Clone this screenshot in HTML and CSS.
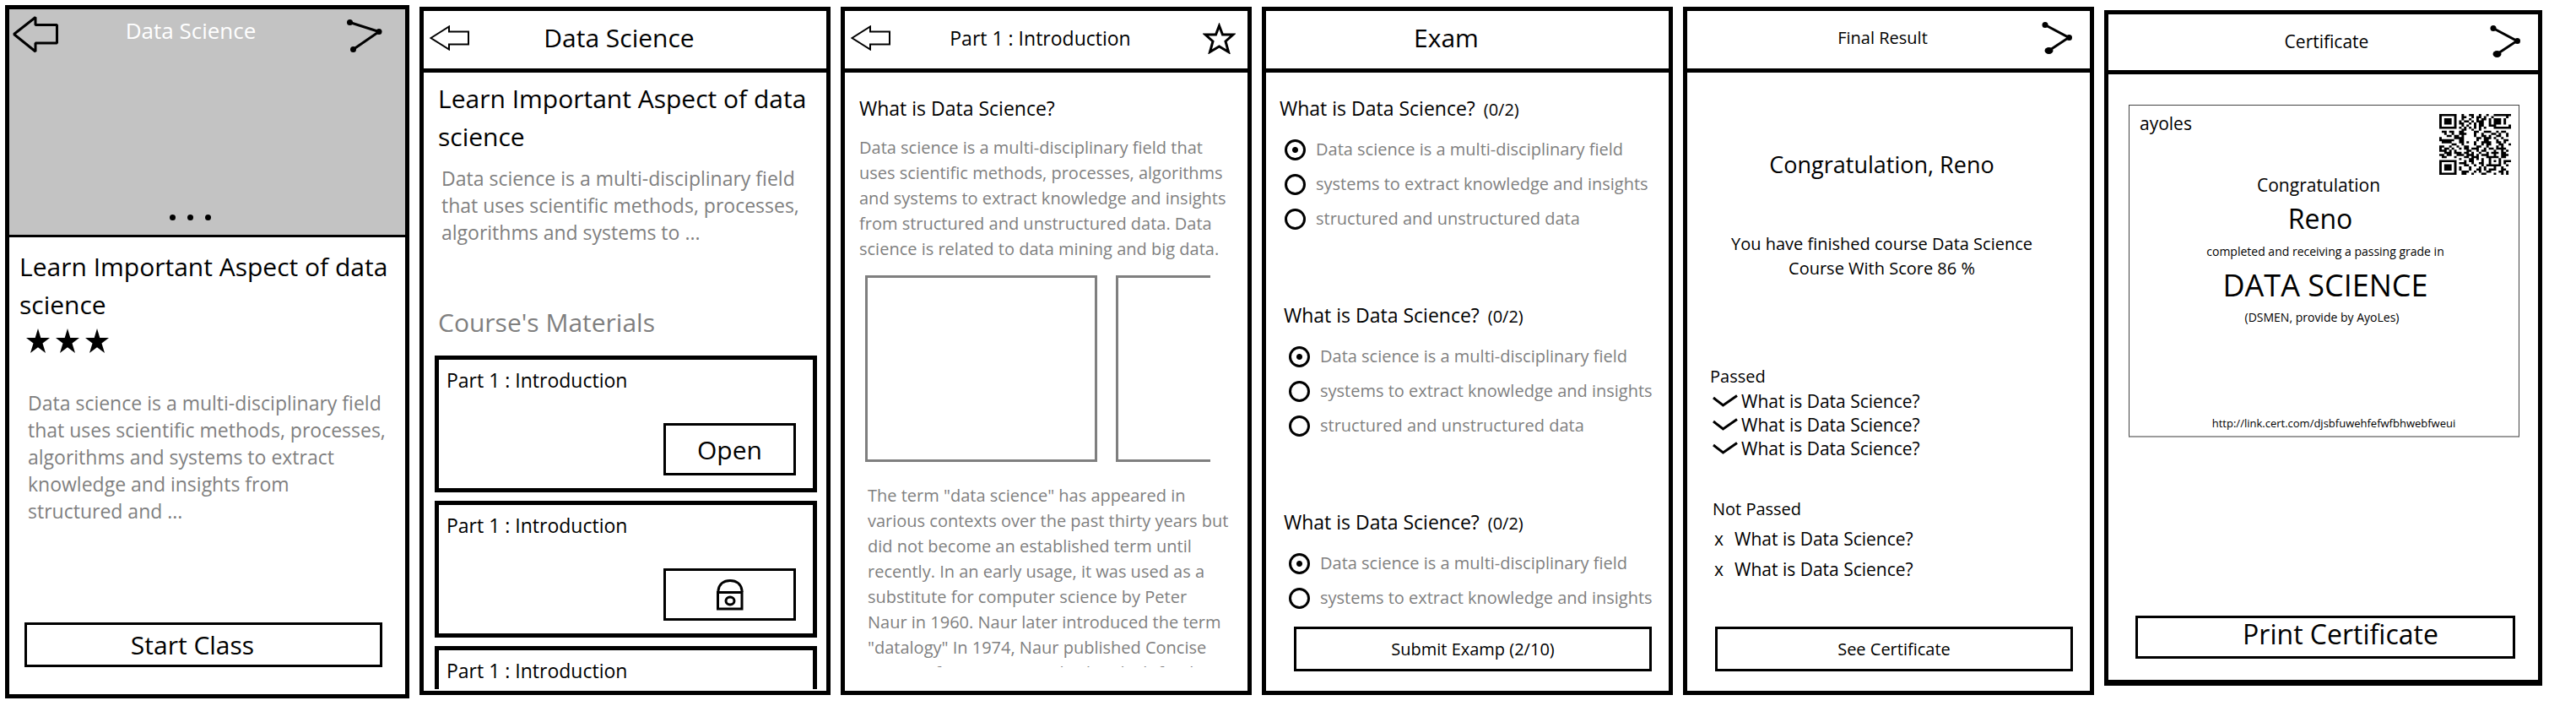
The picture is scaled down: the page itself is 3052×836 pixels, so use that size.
FILE: index.html
```html
<!DOCTYPE html>
<html lang="en">
<head>
<meta charset="utf-8">
<title>AyoLes course screens</title>
<link rel="stylesheet" href="styles.css">
</head>
<body>
<main class="board">

  <section class="screen screen-cover">
    <header class="hero">
      <div class="hero-bar">
        <button class="icon-button" aria-label="Back">
          <svg width="54" height="45" viewBox="0 0 54 45" fill="none" stroke="#000" stroke-width="3"><path d="M1.5 22.5 27 2.5V11.5H52.5V33H27V43Z" stroke-linejoin="bevel"/></svg>
        </button>
        <h1 class="hero-title">Data Science</h1>
        <button class="icon-button" aria-label="Share">
          <svg width="42" height="45" viewBox="0 0 42 45"><path d="M3.5 8.500 38 19.500 7.500 40.500" fill="none" stroke="#000" stroke-width="3"/><circle cx="3.500" cy="8.500" r="3.500"/><circle cx="38" cy="19.500" r="3.500"/><circle cx="7.500" cy="40.500" r="3.500"/></svg>
        </button>
      </div>
      <div class="dots"><span class="dot"></span><span class="dot"></span><span class="dot"></span></div>
    </header>
    <div class="cover-body">
      <h2 class="headline">Learn Important Aspect of data science</h2>
      <div class="stars" role="img" aria-label="3 stars">
        <svg width="28" height="29" viewBox="0 0 28 29"><path d="M14 0 17.300 11H28L19.500 17.600 23 29 14 22.200 5 29 8.500 17.600 0 11H10.700Z"/></svg>
        <svg width="28" height="29" viewBox="0 0 28 29"><path d="M14 0 17.300 11H28L19.500 17.600 23 29 14 22.200 5 29 8.500 17.600 0 11H10.700Z"/></svg>
        <svg width="28" height="29" viewBox="0 0 28 29"><path d="M14 0 17.300 11H28L19.500 17.600 23 29 14 22.200 5 29 8.500 17.600 0 11H10.700Z"/></svg>
      </div>
      <p class="summary">Data science is a multi-disciplinary field<br>that uses scientific methods, processes,<br>algorithms and systems to extract<br>knowledge and insights from<br>structured and ...</p>
    </div>
    <button class="action action-start">Start Class</button>
  </section>

  <section class="screen">
    <header class="bar">
      <button class="icon-button" aria-label="Back">
        <svg width="47" height="30" viewBox="0 0 47 30" fill="none" stroke="#000" stroke-width="2"><path d="M1.500 15 23 1.500V7.500H46V22.500H23V28.500Z"/></svg>
      </button>
      <h1 class="bar-title title-large">Data Science</h1>
    </header>
    <div class="course-body">
      <h2 class="headline">Learn Important Aspect of data science</h2>
      <p class="summary">Data science is a multi-disciplinary field<br>that uses scientific methods, processes,<br>algorithms and systems to ...</p>
      <h2 class="headline materials-title">Course's Materials</h2>
      <div class="cards">
        <article class="card">
          <h3 class="subhead">Part 1 : Introduction</h3>
          <button class="card-button">Open</button>
        </article>
        <article class="card">
          <h3 class="subhead">Part 1 : Introduction</h3>
          <button class="card-button" aria-label="Locked">
            <svg width="32" height="37" viewBox="0 0 32 37" fill="none" stroke="#000" stroke-width="3"><path d="M2 15V13C3 6 8 1.500 16 1.500S29 6 30 13V15"/><path d="M1.500 15.500H30V35H1.500Z"/><ellipse cx="16" cy="25.500" rx="5" ry="4.500"/></svg>
          </button>
        </article>
        <article class="card">
          <h3 class="subhead">Part 1 : Introduction</h3>
        </article>
      </div>
    </div>
  </section>

  <section class="screen">
    <header class="bar">
      <button class="icon-button" aria-label="Back">
        <svg width="47" height="30" viewBox="0 0 47 30" fill="none" stroke="#000" stroke-width="2"><path d="M1.500 15 23 1.500V7.500H46V22.500H23V28.500Z"/></svg>
      </button>
      <h1 class="bar-title title-medium">Part 1 : Introduction</h1>
      <button class="icon-button bar-end-star" aria-label="Add to favourites">
        <svg width="39" height="37" viewBox="0 0 39 37" fill="none" stroke="#000" stroke-width="3"><path d="M19.500 3.500 23.500 14H36L27 22 30.500 34.500 19.500 28 8.500 34.500 12 22 3 14H15.500Z"/></svg>
      </button>
    </header>
    <div class="reader">
      <h2 class="subhead">What is Data Science?</h2>
      <p class="copy">Data science is a multi-disciplinary field that<br>uses scientific methods, processes, algorithms<br>and systems to extract knowledge and insights<br>from structured and unstructured data. Data<br>science is related to data mining and big data.</p>
      <div class="gallery"><div class="slide"></div><div class="slide"></div></div>
      <p class="copy copy-more">The term "data science" has appeared in<br>various contexts over the past thirty years but<br>did not become an established term until<br>recently. In an early usage, it was used as a<br>substitute for computer science by Peter<br>Naur in 1960. Naur later introduced the term<br>"datalogy" In 1974, Naur published Concise<br>Survey of Computer Methods, which freely</p>
    </div>
  </section>

  <section class="screen">
    <header class="bar bar-exam">
      <h1 class="bar-title title-large">Exam</h1>
    </header>
    <form class="exam">
      <fieldset class="question">
        <legend class="subhead">What is Data Science? <span class="score">(0/2)</span></legend>
        <label class="option"><input class="radio" type="radio" name="q1" checked>Data science is a multi-disciplinary field</label>
        <label class="option"><input class="radio" type="radio" name="q1">systems to extract knowledge and insights</label>
        <label class="option"><input class="radio" type="radio" name="q1">structured and unstructured data</label>
      </fieldset>
      <fieldset class="question">
        <legend class="subhead">What is Data Science? <span class="score">(0/2)</span></legend>
        <label class="option"><input class="radio" type="radio" name="q2" checked>Data science is a multi-disciplinary field</label>
        <label class="option"><input class="radio" type="radio" name="q2">systems to extract knowledge and insights</label>
        <label class="option"><input class="radio" type="radio" name="q2">structured and unstructured data</label>
      </fieldset>
      <fieldset class="question">
        <legend class="subhead">What is Data Science? <span class="score">(0/2)</span></legend>
        <label class="option"><input class="radio" type="radio" name="q3" checked>Data science is a multi-disciplinary field</label>
        <label class="option"><input class="radio" type="radio" name="q3">systems to extract knowledge and insights</label>
      </fieldset>
    </form>
    <button class="action">Submit Examp (2/10)</button>
  </section>

  <section class="screen">
    <header class="bar">
      <h1 class="bar-title">Final Result</h1>
      <button class="icon-button bar-end-share" aria-label="Share">
        <svg width="37" height="40" viewBox="0 0 37 40"><path d="M4 4.500 32 19.500 8.500 35" fill="none" stroke="#000" stroke-width="3"/><circle cx="4" cy="4.500" r="3.500"/><circle cx="32.500" cy="19.500" r="3.500"/><ellipse cx="8.500" cy="35" rx="5" ry="4"/></svg>
      </button>
    </header>
    <div class="result">
      <h2 class="congrats">Congratulation, Reno</h2>
      <p class="verdict">You have finished course Data Science<br>Course With Score 86 %</p>
      <h3 class="group-title">Passed</h3>
      <ul class="answers">
        <li class="answer"><svg class="tick" width="30" height="16" viewBox="0 0 30 16" fill="none" stroke="#000" stroke-width="3"><path d="M1 4 12.500 13 29 1.500"/></svg>What is Data Science?</li>
        <li class="answer"><svg class="tick" width="30" height="16" viewBox="0 0 30 16" fill="none" stroke="#000" stroke-width="3"><path d="M1 4 12.500 13 29 1.500"/></svg>What is Data Science?</li>
        <li class="answer"><svg class="tick" width="30" height="16" viewBox="0 0 30 16" fill="none" stroke="#000" stroke-width="3"><path d="M1 4 12.500 13 29 1.500"/></svg>What is Data Science?</li>
      </ul>
      <h3 class="group-title group-failed">Not Passed</h3>
      <ul class="answers answers-failed">
        <li class="answer"><span class="cross">x</span>What is Data Science?</li>
        <li class="answer"><span class="cross">x</span>What is Data Science?</li>
      </ul>
    </div>
    <button class="action">See Certificate</button>
  </section>

  <section class="screen screen-certificate">
    <header class="bar bar-certificate">
      <h1 class="bar-title">Certificate</h1>
      <button class="icon-button bar-end-share" aria-label="Share">
        <svg width="37" height="40" viewBox="0 0 37 40"><path d="M4 4.500 32 19.500 8.500 35" fill="none" stroke="#000" stroke-width="3"/><circle cx="4" cy="4.500" r="3.500"/><circle cx="32.500" cy="19.500" r="3.500"/><ellipse cx="8.500" cy="35" rx="5" ry="4"/></svg>
      </button>
    </header>
    <article class="certificate">
      <div class="certificate-head">
        <span class="brand">ayoles</span>
        <svg class="qr" width="85" height="72" viewBox="0 0 29 29" preserveAspectRatio="none" role="img" aria-label="QR code">
          <path fill="none" stroke="#000" d="M0 .5h7m2 0h1m2 0h2m2 0h1m2 0h1m2 0h7M0 1.500h1m5 0h1m2 0h2m2 0h1m1 0h2m1 0h1m2 0h1m5 0h1M0 2.500h1m1 0h3m1 0h1m2 0h1m2 0h1m2 0h1m1 0h2m1 0h1m1 0h3m1 0h1M0 3.500h1m1 0h3m1 0h1m1 0h1m1 0h2m1 0h1m1 0h3m2 0h1m1 0h3m1 0h1M0 4.500h1m1 0h3m1 0h1m1 0h2m2 0h1m1 0h1m1 0h2m2 0h1m1 0h3m1 0h1M0 5.500h1m5 0h1m2 0h1m1 0h1m2 0h1m1 0h2m2 0h2m0 0h0M22 5.500h1m5 0h1M0 6.500h7m1 0h1m1 0h1m1 0h1m1 0h1m1 0h1m1 0h1m3 0h7M9 7.500h2m2 0h1m2 0h1M1 8.500h2m1 0h2m2 0h2m4 0h2m2 0h3m2 0h1m1 0h2M2 9.500h1m2 0h1m2 0h3m3 0h1m2 0h1m3 0h2m1 0h1m2 0h1M3 10.500h2m1 0h2m1 0h1m4 0h1m2 0h2m1 0h1m2 0h2m2 0h1M0 11.500h1m5 0h4m5 0h2m1 0h3m1 0h1m2 0h1M0 12.500h6m2 0h2m5 0h1m2 0h2m3 0h1m2 0h2M1 13.500h4m3 0h2m1 0h1m2 0h1m2 0h4m2 0h2m1 0h1M5 14.500h2m2 0h1m4 0h1m2 0h1m1 0h2m3 0h2m2 0h1M0 15.500h2m2 0h1m2 0h1m2 0h2m3 0h2m2 0h1m3 0h1m1 0h1M0 16.500h1m1 0h2m1 0h1m2 0h1m1 0h2m1 0h3m2 0h1m1 0h2m1 0h4M0 17.500h3m1 0h1m1 0h1m4 0h2m2 0h1m1 0h2m3 0h1m2 0h1m1 0h1M2 18.500h3m1 0h3m1 0h2m1 0h1m2 0h1m2 0h1m1 0h3m1 0h2M0 19.500h2m1 0h2m2 0h3m1 0h3m1 0h1m1 0h3m2 0h1m2 0h3M1 20.500h2m3 0h1m3 0h2m1 0h3m3 0h5m1 0h2M8 21.500h1m3 0h2m1 0h1m1 0h1m2 0h1m3 0h1M0 22.500h7m3 0h1m1 0h2m3 0h1m2 0h1m1 0h1m1 0h1m1 0h3M0 23.500h1m5 0h1m1 0h3m2 0h1m2 0h2m2 0h1m3 0h1m1 0h1M0 24.500h1m1 0h3m1 0h1m3 0h2m2 0h1m2 0h1m1 0h6m2 0h1M0 25.500h1m1 0h3m1 0h1m1 0h1m3 0h1m3 0h1m1 0h1m3 0h1m2 0h1M0 26.500h1m1 0h3m1 0h1m1 0h1m3 0h1m2 0h2m1 0h1m1 0h3m2 0h2M0 27.500h1m5 0h1m2 0h3m2 0h1m1 0h1m2 0h2m3 0h2m1 0h1M0 28.500h7m2 0h2m2 0h1m3 0h2m3 0h1m2 0h1m1 0h1"/>
        </svg>
      </div>
      <p class="cert-small-title">Congratulation</p>
      <p class="cert-name">Reno</p>
      <p class="cert-note">completed and receiving a passing grade in</p>
      <p class="cert-course">DATA SCIENCE</p>
      <p class="cert-note cert-code">(DSMEN, provide by AyoLes)</p>
      <a class="cert-link" href="http://link.cert.com/djsbfuwehfefwfbhwebfweui">http://link.cert.com/djsbfuwehfefwfbhwebfweui</a>
    </article>
    <button class="action action-print">Print Certificate</button>
  </section>

</main>
</body>
</html>
```

FILE: styles.css
```css
* {
  box-sizing: border-box;
}

body {
  margin: 0;
  background: #fff;
  color: #000;
  font-family: "Open Sans", "Noto Sans", sans-serif;
  font-size: 20px;
}

h1, h2, h3, p, ul {
  margin: 0;
  padding: 0;
  font-weight: 400;
}

button {
  font-family: inherit;
  color: inherit;
  background: none;
  cursor: pointer;
}

svg {
  display: block;
}

/* Board of six phone screens */
.board {
  display: grid;
  grid-template-columns: 479fr 487fr 487fr 487fr 487fr 519fr;
  grid-template-rows: minmax(0, 1fr);
  column-gap: 12px;
  height: 100vh;
  padding: 6px 40px 9px 6px;
}

.screen {
  display: flex;
  flex-direction: column;
  min-width: 0;
  margin: 2px 0 4px;
  border: 5px solid #000;
}

.screen-cover {
  margin: 0;
}

.screen-certificate {
  margin: 6px 0 15px;
  border-bottom-width: 7px;
}

/* Shared text */
.headline {
  font-size: 30px;
  line-height: 45px;
}

.subhead {
  font-size: 23px;
  line-height: 32px;
}

.summary {
  font-size: 23px;
  line-height: 32px;
  color: #7f7f7f;
  white-space: nowrap;
}

.icon-button {
  padding: 0;
  border: 0;
}

/* Header bar */
.bar {
  display: grid;
  grid-template-columns: 54px 1fr 68px;
  align-items: center;
  flex: none;
  padding-bottom: 4px;
  border-bottom: 5px solid #000;
}

.bar .icon-button {
  justify-self: end;
}

.bar-title {
  grid-column: 2;
  font-size: 20px;
  line-height: 64px;
  text-align: center;
}

.title-large {
  font-size: 30px;
}

.title-medium {
  font-size: 23px;
}

.bar-exam {
  grid-template-columns: 0 1fr 50px;
}

.bar-certificate {
  grid-template-columns: 68px 1fr 60px;
  padding-bottom: 2px;
}

.bar-certificate .bar-title {
  font-size: 21px;
}

.bar-end-star {
  padding-right: 14px;
}

.bar-end-share {
  padding-right: 20px;
}

/* Full-width action at the foot of a screen */
.action {
  flex: none;
  margin: auto 20px 23px 33px;
  padding: 0;
  border: 3px solid #000;
  font-size: 20px;
  line-height: 47px;
}

.action-start {
  margin: auto 27px 32px 18px;
  padding-right: 26px;
  font-size: 30px;
}

.action-print {
  margin: auto 27px 25px 32px;
  padding: 0 0 7px 36px;
  font-size: 32px;
  line-height: 38px;
}

/* Cover screen */
.hero {
  display: flex;
  flex-direction: column;
  justify-content: space-between;
  height: 270px;
  padding: 7px 27px 17px 4px;
  background: #c3c3c3;
  border-bottom: 3px solid #000;
}

.hero-bar {
  display: flex;
  align-items: flex-start;
}

.hero-title {
  flex: 1;
  padding-right: 28px;
  color: #fff;
  font-size: 26px;
  line-height: 36px;
  text-align: center;
}

.dots {
  display: flex;
  justify-content: center;
  gap: 14px;
  padding-right: 18px;
}

.dot {
  width: 7px;
  height: 7px;
  border-radius: 50%;
  background: #000;
}

.cover-body {
  padding: 12px 12px 0;
}

.stars {
  display: flex;
  gap: 7px;
  margin: 6px 0 43px 8px;
}

.cover-body .summary {
  padding-left: 10px;
}

/* Course screen */
.course-body {
  flex: 1;
  min-height: 0;
  overflow: hidden;
  margin-bottom: 2px;
  padding: 8px 11px 0 13px;
}

.course-body .headline {
  padding-left: 4px;
}

.course-body .summary {
  margin-top: 11px;
  padding-left: 8px;
}

.course-body .materials-title {
  margin-top: 68px;
  color: #7f7f7f;
}

.cards {
  display: grid;
  gap: 10px;
  margin-top: 17px;
}

.card {
  display: flex;
  flex-direction: column;
  min-height: 162px;
  padding: 8px 20px 15px 9px;
  border: 5px solid #000;
}

.card-button {
  display: grid;
  place-items: center;
  align-self: flex-end;
  width: 157px;
  height: 62px;
  margin-top: 35px;
  padding: 0;
  border: 3px solid #000;
  font-size: 30px;
}

/* Reader screen */
.reader {
  flex: 1;
  min-height: 0;
  overflow: hidden;
  margin-bottom: 28px;
  padding: 26px 17px 0;
}

.copy {
  margin-top: 16px;
  color: #7f7f7f;
  font-size: 20px;
  line-height: 30px;
  white-space: nowrap;
}

.gallery {
  display: flex;
  gap: 22px;
  overflow: hidden;
  margin: 16px 27px 0 7px;
}

.slide {
  flex: none;
  width: 275px;
  height: 221px;
  border: 3px solid #7f7f7f;
}

.copy-more {
  margin-top: 25px;
  padding-left: 10px;
}

/* Exam screen */
.exam {
  display: grid;
  gap: 83px;
  padding: 26px 0 0 16px;
}

.question {
  display: grid;
  gap: 11px;
  min-width: 0;
  margin: 0;
  padding: 0;
  border: 0;
}

.question + .question {
  margin-left: 5px;
}

.question .subhead {
  margin-bottom: 18px;
  padding: 0;
}

.score {
  margin-left: 4px;
  font-size: 20px;
  line-height: 1;
}

.option {
  display: flex;
  align-items: center;
  gap: 12px;
  padding-left: 6px;
  color: #7f7f7f;
  line-height: 30px;
  white-space: nowrap;
}

.radio {
  appearance: none;
  flex: none;
  width: 25px;
  height: 25px;
  margin: 0;
  border: 3px solid #000;
  border-radius: 50%;
}

.radio:checked {
  background: radial-gradient(circle, #000 3px, transparent 4px);
}

/* Result screen */
.result {
  padding: 91px 0 0 27px;
}

.congrats,
.verdict {
  padding-right: 43px;
  text-align: center;
}

.congrats {
  font-size: 27px;
  line-height: 36px;
}

.verdict {
  margin: 61px 0 99px;
  line-height: 29px;
}

.group-title {
  font-size: 20px;
  line-height: 30px;
}

.group-failed {
  margin-top: 43px;
  padding-left: 3px;
}

.answers {
  list-style: none;
  padding-left: 3px;
  font-size: 21px;
  line-height: 28px;
}

.answers-failed {
  margin-top: 2px;
  padding-left: 5px;
  line-height: 36px;
}

.answer {
  display: flex;
  align-items: center;
  gap: 4px;
}

.cross {
  width: 20px;
}

/* Certificate screen */
.certificate {
  display: flex;
  flex-direction: column;
  align-items: center;
  margin: 36px 22px 0 24px;
  padding: 10px 9px 5px 12px;
  border: 1px solid #444;
  border-bottom: 2px solid #9c9c9c;
}

.certificate-head {
  display: flex;
  justify-content: space-between;
  align-items: flex-start;
  align-self: stretch;
}

.brand {
  font-size: 21px;
  line-height: 22px;
}

.cert-small-title {
  padding-right: 16px;
  font-size: 21px;
  line-height: 24px;
}

.cert-name {
  margin-top: 10px;
  padding-right: 12px;
  font-size: 32px;
  line-height: 36px;
}

.cert-note {
  margin-top: 11px;
  font-size: 14px;
  line-height: 20px;
}

.cert-course {
  margin-top: 8px;
  font-size: 36px;
  line-height: 44px;
}

.cert-code {
  margin-top: 6px;
  padding-right: 8px;
}

.cert-link {
  margin-top: 105px;
  padding-left: 20px;
  color: inherit;
  font-size: 13px;
  line-height: 20px;
  text-decoration: none;
}
```
